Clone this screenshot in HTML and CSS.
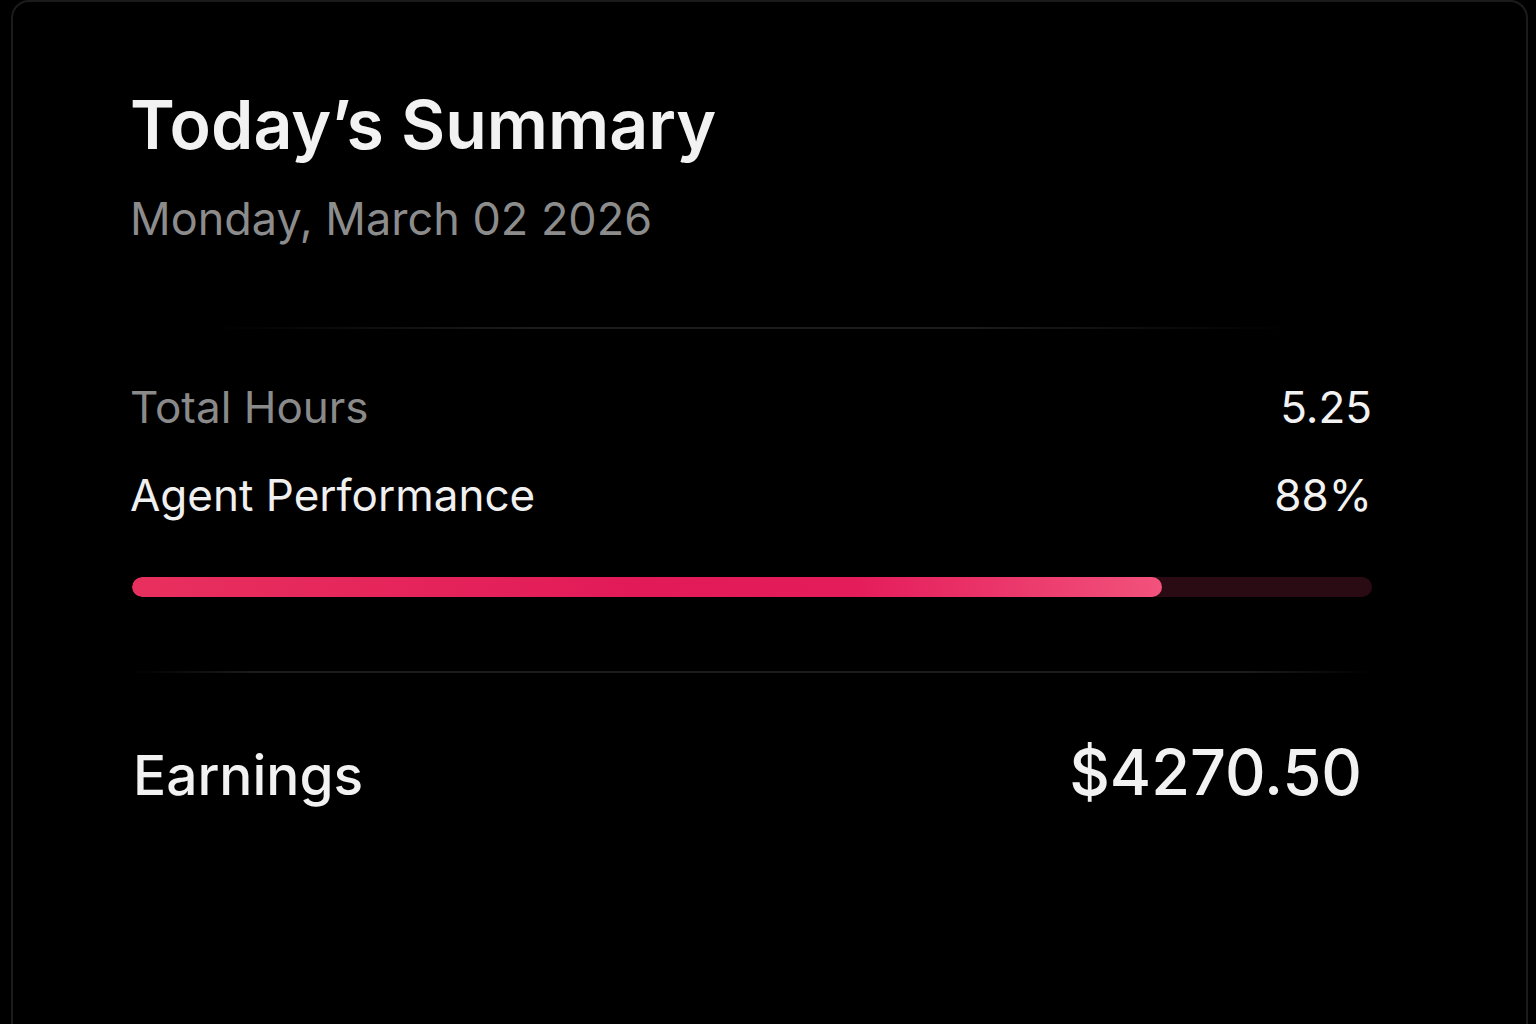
FILE: index.html
```html
<!DOCTYPE html>
<html lang="en">
<head>
<meta charset="utf-8">
<title>Today's Summary</title>
<link rel="stylesheet" href="styles.css">
</head>
<body>
<main class="card">
  <header class="head">
    <h1 class="title">Today’s Summary</h1>
    <p class="date">Monday, March 02 2026</p>
  </header>
  <div class="divider divider-top"></div>
  <section class="stats">
    <div class="row row-muted">
      <span class="label">Total Hours</span>
      <span class="value">5.25</span>
    </div>
    <div class="row">
      <span class="label">Agent Performance</span>
      <span class="value">88%</span>
    </div>
    <div class="track"><div class="fill" style="width:83.1%"></div></div>
  </section>
  <div class="divider divider-bottom"></div>
  <section class="earnings">
    <span class="earn-label">Earnings</span>
    <span class="earn-value">$4270.50</span>
  </section>
</main>
</body>
</html>
```
FILE: styles.css
```css
* { box-sizing: border-box; }
html, body { margin: 0; padding: 0; background: #000; }
body {
  font-family: Inter, "Noto Sans", "DejaVu Sans", sans-serif;
  color: #f0f0f0;
  height: 1024px;
  overflow: hidden;
}
.card {
  margin: 0 8px 0 11px;
  height: 1024px;
  border: 2px solid #1b1b1b;
  border-bottom: none;
  border-radius: 18px 18px 0 0;
  padding: 77px 154px 0 117px;
}
.head { margin: 0; }
.title {
  margin: 0;
  font-size: 68px;
  font-weight: 600;
  line-height: 90px;
  letter-spacing: 0;
  color: #f2f2f2;
}
.date {
  margin: 20px 0 0 0;
  font-size: 45px;
  font-weight: 400;
  line-height: 60px;
  color: #8c8c8c;
}
.divider {
  height: 2px;
}
.divider-top {
  margin: 78px 80px 0 80px;
  background: linear-gradient(90deg, rgba(30,30,30,0) 0%, #1c1c1c 30%, #1c1c1c 70%, rgba(30,30,30,0) 100%);
}
.stats { margin-top: 50px; }
.row {
  display: flex;
  justify-content: space-between;
  align-items: baseline;
  font-size: 44px;
  line-height: 56px;
  height: 88px;
  color: #f0f0f0;
}
.row-muted .label { color: #8a8a8a; }
.row .value { color: #f2f2f2; }
.track {
  margin-top: 22px;
  margin-left: 2px;
  height: 20px;
  border-radius: 10px;
  background: #2a0b14;
  overflow: hidden;
}
.fill {
  height: 100%;
  border-radius: 10px;
  background: linear-gradient(90deg, #e8305e 0%, #e21a58 50%, #e41c5a 70%, #f2527c 100%);
}
.divider-bottom {
  margin: 74px 0 0 0;
  background: linear-gradient(90deg, rgba(30,30,30,0) 0%, #1c1c1c 10%, #1c1c1c 90%, rgba(30,30,30,0) 100%);
}
.earnings {
  margin-top: 59px;
  display: flex;
  justify-content: space-between;
  align-items: baseline;
  padding: 0 10px 0 3px;
}
.earn-label {
  font-size: 55px;
  font-weight: 500;
  line-height: 80px;
  color: #f2f2f2;
}
.earn-value {
  font-size: 63px;
  font-weight: 500;
  line-height: 80px;
  color: #f2f2f2;
}
```
